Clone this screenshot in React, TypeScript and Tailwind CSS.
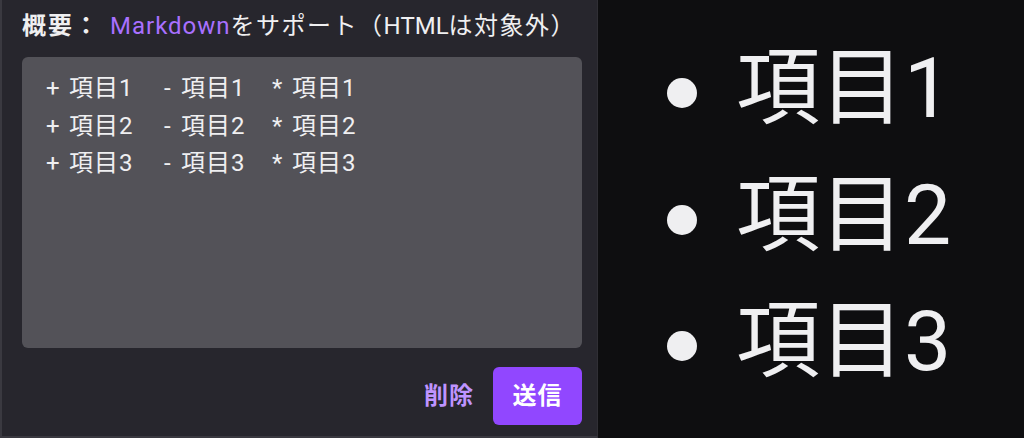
import React from "react";

const FONT = "font-['Roboto','Noto_Sans_CJK_JP',sans-serif]";

function Cell({ marker, w, label }: { marker: string; w: string; label: string }) {
  return (
    <div className="flex whitespace-nowrap">
      <span className={w}>{marker}</span>
      <span className="tracking-[1px]">{label}</span>
    </div>
  );
}

export default function App() {
  const rows = ["1", "2", "3"];
  return (
    <div className={`flex w-[1024px] h-[438px] overflow-hidden ${FONT} text-[#efeff1]`}>
      <div className="w-[598px] h-[438px] shrink-0 bg-[#27262d] border-l-2 border-b-2 border-r border-l-[#3a3940] border-b-[#3a3940] border-r-[#302f35] pl-[20px] flex flex-col">
        <div className="w-[570px] pt-[10px] leading-[32px] text-[24px] flex whitespace-nowrap">
          <span className="font-bold tracking-[2px]">概要：</span>
          <span className="ml-[10px]">
            <span className="text-[#a970ff] tracking-[1px]">Markdown</span>
            <span className="tracking-[1.5px]">をサポート（</span>
            <span>HTML</span>
            <span className="tracking-[1.5px]">は対象外）</span>
          </span>
        </div>
        <div className="mt-[15px] w-[560px] h-[291px] rounded-[6px] bg-[#535258] pt-[13px] pl-[24px] text-[24px] leading-[37.5px]">
          <div className="grid grid-cols-[118px_108px_auto]">
            {rows.map((n) => (
              <React.Fragment key={n}>
                <Cell marker="+" w="w-[23px]" label={`項目${n}`} />
                <Cell marker="-" w="w-[17px]" label={`項目${n}`} />
                <Cell marker="*" w="w-[20px]" label={`項目${n}`} />
              </React.Fragment>
            ))}
          </div>
        </div>
        <div className="mt-[19px] w-[560px] h-[58px] flex items-center justify-end">
          <span className="text-[24px] font-bold tracking-[1px] text-[#bf94ff] mr-[19px]">削除</span>
          <div className="w-[89px] h-[58px] rounded-[6px] bg-[#9147ff] flex items-center justify-center text-[24px] font-bold tracking-[1px] text-white">
            送信
          </div>
        </div>
      </div>
      <div className="flex-1 h-[438px] bg-[#0e0e10] pl-[69px] pt-[26px] flex flex-col">
        {rows.map((n) => (
          <div key={n} className="h-[126.5px] flex items-center shrink-0">
            <span className="w-[30px] h-[30px] rounded-full bg-[#efeff1] mt-[8px] shrink-0" />
            <span className="ml-[39px] text-[84px] leading-none whitespace-nowrap">{`項目${n}`}</span>
          </div>
        ))}
      </div>
    </div>
  );
}
